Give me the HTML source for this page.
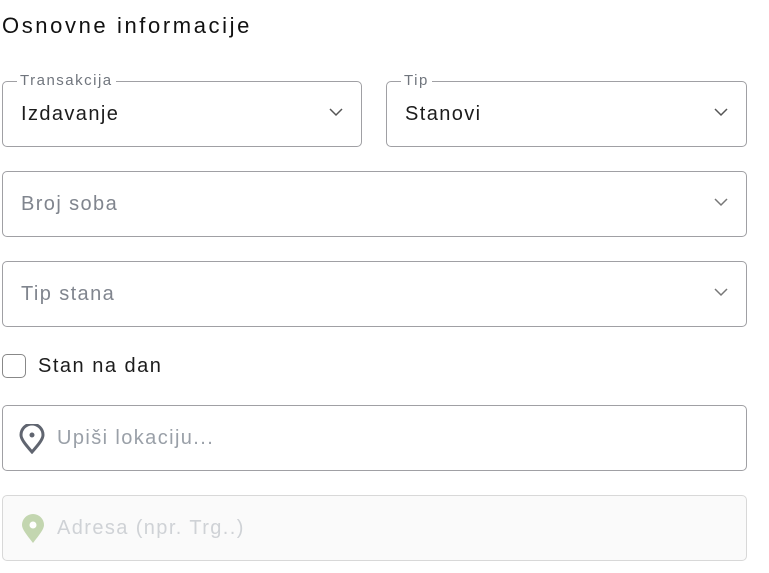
<!DOCTYPE html>
<html><head><style>
body{margin:0;background:#fff;font-family:"Liberation Sans",sans-serif;width:769px;height:573px;overflow:hidden;position:relative}
.t{position:absolute;left:2px;top:13px;font-size:22px;color:#111;letter-spacing:2.6px}
.b{position:absolute;box-sizing:border-box;border:1px solid #a0a0a4;border-radius:5px;height:66px}
.v{position:absolute;left:18px;top:21px;font-size:20px;color:#1c1c1c;letter-spacing:1.4px}
.p{color:#80858e}
.lab{position:absolute;top:-10px;left:14px;background:#fff;padding:0 3px;font-size:15px;color:#70757d;letter-spacing:1.5px;line-height:17px}
.ch{position:absolute;right:18px;top:26px}
</style></head><body>
<div class="t">Osnovne informacije</div>
<div class="b" style="left:2px;top:81px;width:360px"><span class="lab">Transakcija</span><span class="v">Izdavanje</span><svg class="ch" width="14" height="9" viewBox="0 0 14 9"><path d="M1 1l6 6 6-6" fill="none" stroke="#555" stroke-width="1.5"/></svg></div>
<div class="b" style="left:386px;top:81px;width:361px"><span class="lab">Tip</span><span class="v">Stanovi</span><svg class="ch" width="14" height="9" viewBox="0 0 14 9"><path d="M1 1l6 6 6-6" fill="none" stroke="#555" stroke-width="1.5"/></svg></div>
<div class="b" style="left:2px;top:171px;width:745px"><span class="v p">Broj soba</span><svg class="ch" width="14" height="9" viewBox="0 0 14 9"><path d="M1 1l6 6 6-6" fill="none" stroke="#777" stroke-width="1.5"/></svg></div>
<div class="b" style="left:2px;top:261px;width:745px"><span class="v p">Tip stana</span><svg class="ch" width="14" height="9" viewBox="0 0 14 9"><path d="M1 1l6 6 6-6" fill="none" stroke="#777" stroke-width="1.5"/></svg></div>
<div style="position:absolute;left:2px;top:354px;width:24px;height:24px;box-sizing:border-box;border:1px solid #888;border-radius:5px"></div>
<div style="position:absolute;left:38px;top:355px;font-size:20px;color:#1c1c1c;letter-spacing:1.5px">Stan na dan</div>
<div class="b" style="left:2px;top:405px;width:745px"><svg style="position:absolute;left:16px;top:18px" width="26" height="30" viewBox="0 0 26 30"><path d="M13 28C6 20 2 15 2 11a11 11 0 0 1 22 0c0 4-4 9-11 17z" fill="none" stroke="#606570" stroke-width="3"/><circle cx="13" cy="11" r="2.5" fill="#606570"/></svg><span class="v p" style="left:54px;color:#9aa0a8">Upiši lokaciju...</span></div>
<div class="b" style="left:2px;top:495px;width:745px;border-color:#d8d8d8;background:#fafafa"><svg style="position:absolute;left:18px;top:18px" width="24" height="30" viewBox="0 0 24 30"><path d="M12 29C5 20 1 15 1 11a11 11 0 0 1 22 0c0 4-4 9-11 18z" fill="#c3d6b0"/><circle cx="12" cy="11" r="3.5" fill="#fff"/></svg><span class="v" style="left:54px;color:#cfd2d6">Adresa (npr. Trg..)</span></div>
</body></html>
